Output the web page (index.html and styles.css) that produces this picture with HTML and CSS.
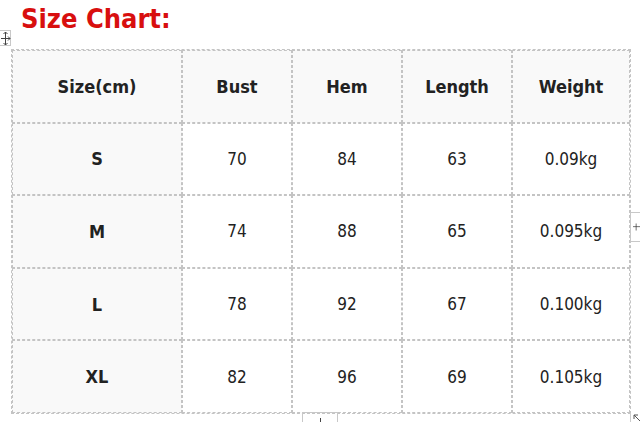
FILE: index.html
```html
<!DOCTYPE html>
<html>
<head>
<meta charset="utf-8">
<link rel="stylesheet" href="styles.css">
</head>
<body>
<div class="page">
  <h1 class="title">Size Chart:</h1>
  <div class="move-handle">
    <svg width="11" height="15" viewBox="0 0 11 15"><path d="M5.5 1v13M1 7.5h9M3.5 3l2-2 2 2M3.5 12l2 2 2-2M8 5.5l2 2-2 2" fill="none" stroke="#444" stroke-width="1"/></svg>
  </div>
  <table class="chart">
    <tr class="head">
      <th>Size(cm)</th><th>Bust</th><th>Hem</th><th>Length</th><th>Weight</th>
    </tr>
    <tr><th>S</th><td>70</td><td>84</td><td>63</td><td>0.09kg</td></tr>
    <tr><th>M</th><td>74</td><td>88</td><td>65</td><td>0.095kg</td></tr>
    <tr><th>L</th><td>78</td><td>92</td><td>67</td><td>0.100kg</td></tr>
    <tr><th>XL</th><td>82</td><td>96</td><td>69</td><td>0.105kg</td></tr>
  </table>
  <div class="row-add">
    <svg width="10" height="10" viewBox="0 0 10 10"><path d="M4.5 0v10M0 4.5h10" stroke="#333" stroke-width="1" fill="none"/></svg>
  </div>
  <div class="col-tab"></div>
  <div class="resize">
    <svg width="8" height="8" viewBox="0 0 8 8"><path d="M1 1l6 6M1 1h4M1 1v4" stroke="#555" stroke-width="1" fill="none"/></svg>
  </div>
</div>
</body>
</html>
```
FILE: styles.css
```css
html, body {
  margin: 0;
  padding: 0;
  background: #fff;
}
.page {
  position: relative;
  width: 640px;
  height: 422px;
  overflow: hidden;
  font-family: "DejaVu Sans Condensed", "DejaVu Sans", sans-serif;
}
.title {
  margin: 0;
  padding: 2px 0 0 21px;
  height: 48px;
  box-sizing: border-box;
  font-size: 27px;
  line-height: 33px;
  font-weight: bold;
  color: #d80f0f;
}
.move-handle {
  position: absolute;
  left: 0;
  top: 30px;
  width: 11px;
  height: 16px;
  border: 1px solid #c8c8c8;
  border-left: none;
  background: #fff;
  box-sizing: border-box;
}
.move-handle svg {
  display: block;
}
.chart {
  margin: 1px 0 0 11px;
  border-collapse: separate;
  border-spacing: 0;
  border: 1px dashed #c4c4c4;
  table-layout: fixed;
}
.chart th, .chart td {
  border: 1px dashed #c4c4c4;
  padding: 0;
  height: 70.6px;
  text-align: center;
  vertical-align: middle;
  color: #222;
  font-size: 17px;
}
.chart td {
  font-weight: normal;
}
.chart th {
  font-weight: bold;
  background: #f9f9f9;
  font-size: 18px;
}
.chart .head th:nth-child(1) { width: 168px; }
.chart .head th:nth-child(2),
.chart .head th:nth-child(3),
.chart .head th:nth-child(4) { width: 108px; }
.chart .head th:nth-child(5) { width: 116px; }
.row-add {
  position: absolute;
  left: 630px;
  top: 212px;
  width: 10px;
  height: 30px;
  border: 1px solid #c8c8c8;
  border-right: none;
  background: #fff;
  box-sizing: border-box;
  display: flex;
  align-items: center;
  padding-left: 2px;
}
.row-add svg {
  display: block;
}
.col-tab {
  position: absolute;
  left: 302px;
  top: 412px;
  width: 36px;
  height: 12px;
  border: 1px solid #c8c8c8;
  box-sizing: border-box;
}
.col-tab::after {
  content: "";
  position: absolute;
  left: 17px;
  top: 5px;
  width: 1px;
  height: 6px;
  background: #444;
}
.resize {
  position: absolute;
  left: 630px;
  top: 413px;
  width: 10px;
  height: 10px;
  border-left: 1px solid #ccc;
  padding: 1px 0 0 2px;
  box-sizing: border-box;
}
.resize svg {
  display: block;
}
```
